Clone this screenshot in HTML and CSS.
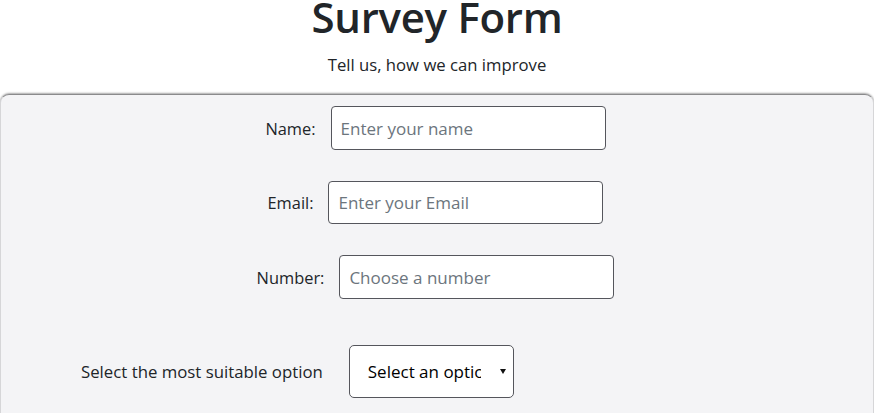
FILE: index.html
```html
<!DOCTYPE html>
<html lang="en">
<head>
<meta charset="utf-8">
<title>Survey Form</title>
<link rel="stylesheet" href="styles.css">
</head>
<body>
<header class="head">
  <h1 class="title">Survey Form</h1>
  <p class="subtitle">Tell us, how we can improve</p>
</header>
<div class="clip">
  <form class="card">
    <div class="row row-name">
      <label class="label" for="name">Name:</label>
      <input class="field" id="name" type="text" placeholder="Enter your name">
    </div>
    <div class="row row-email">
      <label class="label" for="email">Email:</label>
      <input class="field" id="email" type="email" placeholder="Enter your Email">
    </div>
    <div class="row row-number">
      <label class="label" for="number">Number:</label>
      <input class="field" id="number" type="number" placeholder="Choose a number">
    </div>
    <div class="row row-select">
      <label class="label label-select" for="option">Select the most suitable option</label>
      <div class="select-wrap">
        <select class="select" id="option">
          <option>Select an option</option>
        </select>
      </div>
    </div>
  </form>
</div>
</body>
</html>
```
FILE: styles.css
```css
* { box-sizing: border-box; }
html, body { margin: 0; background: #fff; }
body {
  font-family: "Open Sans", "Noto Sans", sans-serif;
  color: #212529;
}
.head {
  text-align: center;
}
.title {
  margin: 0;
  font-size: 42px;
  font-weight: 600;
  line-height: 34px;
  letter-spacing: -0.3px;
}
.subtitle {
  margin: 0;
  padding-top: 19px;
  font-size: 16.7px;
  line-height: 24px;
}
.clip {
  height: 336px;
  overflow: hidden;
  padding-top: 17px;
}
.card {
  background: #f4f4f6;
  border: 1px solid #d6d6d8;
  border-top: 1px solid #8a8a8c;
  border-radius: 9px;
  box-shadow: 0 -1px 2px rgba(0,0,0,0.35);
  height: 420px;
  padding-top: 11px;
}
.row {
  display: flex;
  align-items: center;
  justify-content: center;
  gap: 15px;
  margin-right: 3px;
}
.row-email { margin-top: 31px; }
.row-number { margin-top: 31px; }
.row-select {
  margin-top: 46px;
  justify-content: flex-start;
  padding-left: 80px;
  gap: 26px;
}
.label {
  font-size: 16.4px;
  color: #212529;
}
.label-select {
  font-size: 16.8px;
}
.field {
  width: 275px;
  height: 44px;
  border: 1px solid #55565c;
  border-radius: 4px;
  background: #fff;
  padding: 0 9px;
  font-family: inherit;
  font-size: 17px;
  color: #212529;
}
.field::placeholder { color: #6c757d; }
.row-email .field { height: 43px; }
.select-wrap {
  position: relative;
}
.select-wrap::after {
  content: "";
  position: absolute;
  right: 8px;
  top: 24px;
  border-left: 3px solid transparent;
  border-right: 3px solid transparent;
  border-top: 5px solid #111;
  pointer-events: none;
}
.select {
  appearance: none;
  -webkit-appearance: none;
  display: block;
  width: 165px;
  height: 53px;
  border: 1px solid #55565c;
  border-radius: 5px;
  background: #fff;
  padding: 0 32px 0 18px;
  font-family: inherit;
  font-size: 17px;
  color: #000;
}
```
